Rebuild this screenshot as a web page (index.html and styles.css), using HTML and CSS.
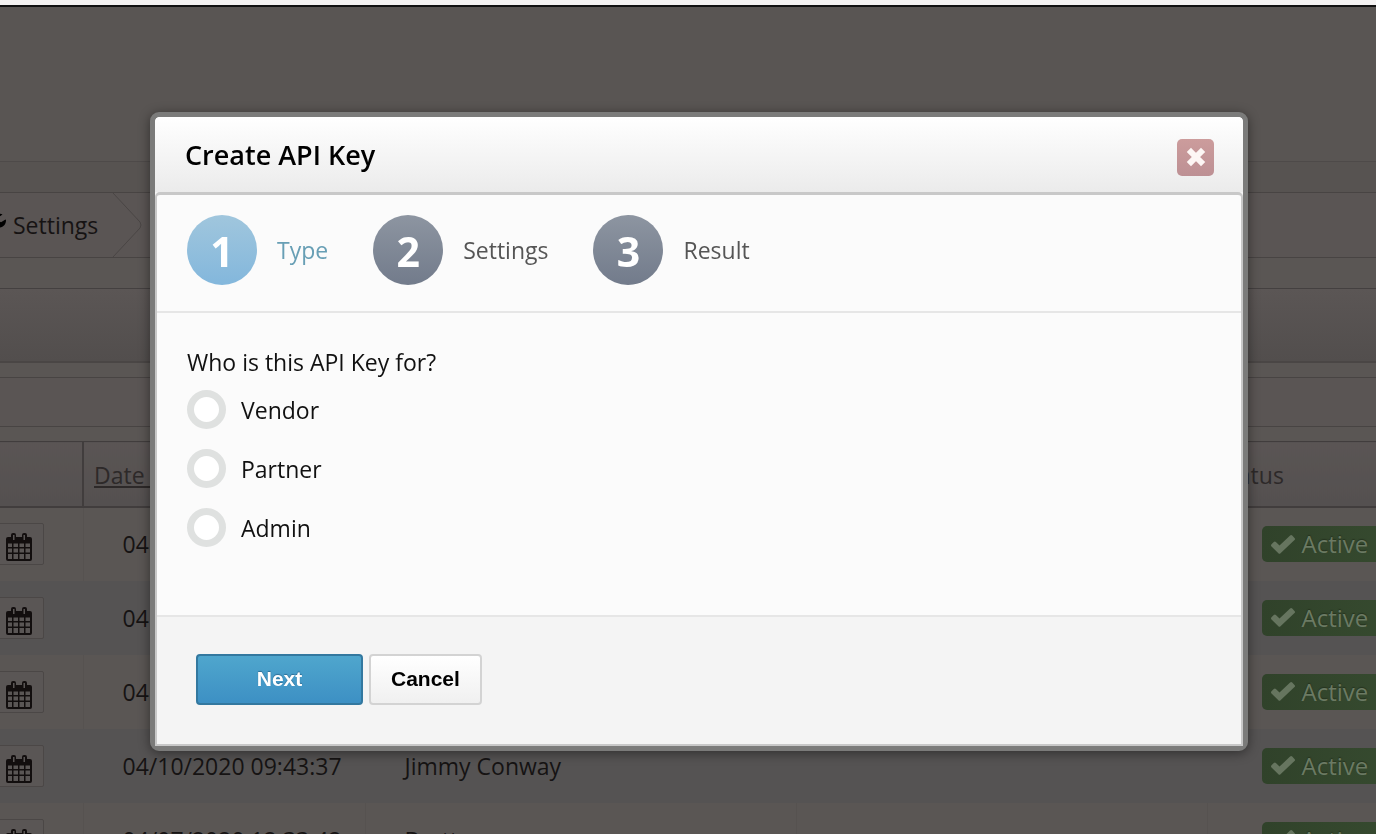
FILE: index.html
```html
<!DOCTYPE html>
<html lang="en">
  <head>
    <meta charset="UTF-8" />
    <meta name="viewport" content="width=device-width, initial-scale=1.0" />
    <title>API Keys</title>
    <link rel="stylesheet" href="styles.css">
  </head>
  <body>
    <!-- shared icons -->
    <svg class="sprite" aria-hidden="true">
      <symbol id="calendar" viewBox="0 0 26 28">
        <path fill-rule="evenodd" d="M2 4h3V2a2 2 0 0 1 2-2h1a2 2 0 0 1 2 2v2h6V2a2 2 0 0 1 2-2h1a2 2 0 0 1 2 2v2h3a2 2 0 0 1 2 2v20a2 2 0 0 1-2 2H2a2 2 0 0 1-2-2V6a2 2 0 0 1 2-2zM7 2v5h1.500V2zM17.500 2v5H19V2zM2 10.500v3.500h4v-3.500zM7.500 10.500v3.500h4.500v-3.500zM13.500 10.500v3.500h4.500v-3.500zM19.500 10.500v3.500H24v-3.500zM2 15.500v4h4v-4zM7.500 15.500v4h4.500v-4zM13.500 15.500v4h4.500v-4zM19.500 15.500v4H24v-4zM2 21v5h4v-5zM7.500 21v5h4.500v-5zM13.500 21v5h4.500v-5zM19.500 21v5H24v-5z" />
      </symbol>
      <symbol id="check" viewBox="0 0 24 19">
        <path d="M9.500 18.300a1.500 1.500 0 0 1-2.100 0L.5 11.400a1.500 1.500 0 0 1 0-2.100l2.300-2.300a1.500 1.500 0 0 1 2.100 0l3.600 3.600L19.100.600a1.500 1.500 0 0 1 2.100 0L23.500 2.900a1.500 1.500 0 0 1 0 2.100z" />
      </symbol>
    </svg>

    <div class="page">
      <div class="page-header"></div>
      <div class="toolbar"></div>

      <nav class="breadcrumb">
        <a class="crumb" href="#">
          <svg class="wrench" viewBox="0 0 24 24" aria-hidden="true">
            <path d="M23 7.500c0 4-3 7-7 7-1 0-2-.2-3-.6L5.500 21.500a2.800 2.800 0 0 1-4-4L9.100 10c-.4-1-.6-2-.6-3 0-4 3-6.500 7-6.500 1.500 0 3 .4 4 1.100L15 4.500v3.200l3 1.600 4.500-2.800c.3 0 .5.400.5 1z" />
          </svg>
          Settings
        </a>
        <svg class="crumb-arrow" viewBox="0 0 30 64" aria-hidden="true">
          <path d="M1 0L28 29q2 3 0 6L1 64" fill="none" stroke="#4a4645" />
        </svg>
      </nav>

      <div class="panel-title"></div>
      <div class="filters"></div>

      <table class="keys">
        <thead>
          <tr>
            <th class="col-icon"></th>
            <th class="col-date"><a href="#">Date Created</a></th>
            <th class="col-name">Name</th>
            <th class="col-note"></th>
            <th class="col-status">Status</th>
          </tr>
        </thead>
        <tbody>
          <tr>
            <td class="col-icon"><button class="icon-btn" aria-label="Schedule"><svg class="calendar"><use href="#calendar" /></svg></button></td>
            <td>04</td>
            <td></td>
            <td></td>
            <td class="col-status"><span class="badge"><svg class="check"><use href="#check" /></svg>Active</span></td>
          </tr>
          <tr>
            <td class="col-icon"><button class="icon-btn" aria-label="Schedule"><svg class="calendar"><use href="#calendar" /></svg></button></td>
            <td>04</td>
            <td></td>
            <td></td>
            <td class="col-status"><span class="badge"><svg class="check"><use href="#check" /></svg>Active</span></td>
          </tr>
          <tr>
            <td class="col-icon"><button class="icon-btn" aria-label="Schedule"><svg class="calendar"><use href="#calendar" /></svg></button></td>
            <td>04</td>
            <td></td>
            <td></td>
            <td class="col-status"><span class="badge"><svg class="check"><use href="#check" /></svg>Active</span></td>
          </tr>
          <tr>
            <td class="col-icon"><button class="icon-btn" aria-label="Schedule"><svg class="calendar"><use href="#calendar" /></svg></button></td>
            <td>04/10/2020 09:43:37</td>
            <td>Jimmy Conway</td>
            <td></td>
            <td class="col-status"><span class="badge"><svg class="check"><use href="#check" /></svg>Active</span></td>
          </tr>
          <tr>
            <td class="col-icon"><button class="icon-btn" aria-label="Schedule"><svg class="calendar"><use href="#calendar" /></svg></button></td>
            <td>04/07/2020 12:33:42</td>
            <td>Brett</td>
            <td></td>
            <td class="col-status"><span class="badge"><svg class="check"><use href="#check" /></svg>Active</span></td>
          </tr>
        </tbody>
      </table>
    </div>

    <div class="overlay">
      <form class="modal" role="dialog" aria-labelledby="modalTitle">
        <header class="modal-header">
          <h1 id="modalTitle">Create API Key</h1>
          <button type="button" class="close-btn" aria-label="Close">
            <svg viewBox="0 0 20 20" aria-hidden="true">
              <path d="M5 5l10 10M15 5L5 15" fill="none" stroke="#fdf6f4" stroke-width="6" stroke-linecap="square" />
            </svg>
          </button>
        </header>

        <div class="modal-content">
          <ol class="steps">
            <li class="step active"><span class="number">1</span>Type</li>
            <li class="step"><span class="number">2</span>Settings</li>
            <li class="step"><span class="number">3</span>Result</li>
          </ol>

          <fieldset class="options">
            <legend>Who is this API Key for?</legend>
            <label class="option"><input type="radio" name="type" value="vendor">Vendor</label>
            <label class="option"><input type="radio" name="type" value="partner">Partner</label>
            <label class="option"><input type="radio" name="type" value="admin">Admin</label>
          </fieldset>

          <footer class="modal-footer">
            <button type="button" class="btn btn-primary">Next</button>
            <button type="button" class="btn">Cancel</button>
          </footer>
        </div>
      </form>
    </div>
  </body>
</html>
```

FILE: styles.css
```css
* {
  margin: 0;
  padding: 0;
  box-sizing: border-box;
}

body {
  font-family: 'Open Sans', sans-serif;
  font-size: 23px;
  line-height: 32px;
  color: #161313;
  background: #5a5654;
  height: 100vh;
  overflow: hidden;
}

.sprite {
  display: none;
}

/* dimmed page behind the dialog */
.page {
  height: 100vh;
  overflow: hidden;
  border-top: 5px solid #f4f2f2;
}

.page-header {
  height: 157px;
  background: #595553;
  border-top: 2px solid #111;
  border-bottom: 1px solid #4e4a49;
}

.toolbar {
  height: 30px;
  background: #575351;
}

.breadcrumb {
  display: flex;
  height: 66px;
  background: #5a5554;
  border-top: 1px solid #484443;
  border-bottom: 1px solid #484443;
}

.crumb {
  display: flex;
  align-items: center;
  gap: 6px;
  margin-left: -17px;
  padding-right: 14px;
  color: #161313;
  text-decoration: none;
}

.wrench {
  width: 24px;
  height: 24px;
}

.crumb-arrow {
  width: 30px;
  height: 64px;
}

.panel-title {
  height: 75px;
  margin-top: 30px;
  background: linear-gradient(#5b5655, #524e4d);
  border-top: 1px solid #444040;
  border-bottom: 2px solid #4a4645;
}

.filters {
  height: 50px;
  margin: 14px 0;
  background: #5a5554;
  border-top: 1px solid #484443;
  border-bottom: 1px solid #484443;
}

.keys {
  width: 100%;
  table-layout: fixed;
  border-collapse: collapse;
}

.keys th {
  height: 65px;
  padding: 2px 10px 0;
  font-weight: normal;
  text-align: left;
  color: #2d2929;
  background: linear-gradient(#5a5554, #545050);
  border-top: 1px solid #413d3d;
  border-bottom: 2px solid #413d3d;
  white-space: nowrap;
}

.keys th a {
  color: inherit;
}

.keys .col-date {
  width: 282px;
  border-left: 2px solid #413d3d;
}

.keys .col-name {
  width: 431px;
}

.keys .col-status {
  width: 169px;
}

.keys td {
  height: 74px;
  padding: 0 0 0 39px;
  background: #5a5654;
  border-left: 1px solid #565250;
  white-space: nowrap;
}

.keys tbody tr:nth-child(even) td {
  background: #555353;
  border-left-color: #555353;
}

.keys .col-icon {
  width: 83px;
  padding: 0;
  border-left: none;
}

.keys td.col-status {
  padding-left: 54px;
}

.icon-btn {
  display: flex;
  align-items: center;
  justify-content: center;
  width: 51px;
  height: 42px;
  margin-left: -7px;
  padding-top: 6px;
  background: #5a5655;
  border: 1px solid #4b4746;
  border-radius: 2px;
}

.calendar {
  width: 26px;
  height: 28px;
  fill: #120e0e;
}

.badge {
  display: flex;
  align-items: center;
  gap: 7px;
  width: 130px;
  height: 36px;
  padding-left: 9px;
  font-size: 24px;
  color: #6b7a63;
  background: linear-gradient(90deg, #30422a, #364a2f);
  border-radius: 5px;
  text-shadow: 0 -1px 1px #25331f;
}

.check {
  width: 24px;
  height: 19px;
  fill: #66755f;
}

/* dialog */
.overlay {
  position: fixed;
  inset: 0;
  padding: 112px 128px 0 150px;
}

.modal {
  background: #f4f4f4;
  background-clip: padding-box;
  border: 5px solid #7b7b7a;
  border-radius: 9px;
  box-shadow: 0 2px 12px rgba(0, 0, 0, 0.45);
}

.modal-header {
  display: flex;
  align-items: center;
  justify-content: space-between;
  height: 75px;
  padding: 0 29px 0 30px;
  background: linear-gradient(#fff, #ebebeb);
  border-radius: 5px 5px 0 0;
}

h1 {
  font-size: 27px;
  font-weight: 600;
  color: #000;
}

.close-btn {
  display: flex;
  align-items: center;
  justify-content: center;
  width: 37px;
  height: 37px;
  margin-top: 5px;
  background: linear-gradient(#cc9c9c, #bd9094);
  border: none;
  border-radius: 5px;
}

.close-btn svg {
  width: 20px;
  height: 20px;
}

.modal-content {
  background: #fbfbfb;
  border: 2px solid #c8c8c8;
  border-top-width: 3px;
  border-radius: 5px 5px 0 0;
  color: #111;
}

.steps {
  display: flex;
  gap: 45px;
  height: 118px;
  padding: 20px 30px 0;
  list-style: none;
  border-bottom: 2px solid #e6e6e6;
}

.step {
  display: flex;
  align-items: center;
  gap: 20px;
  height: 70px;
  color: #555;
}

.number {
  width: 70px;
  height: 70px;
  font-size: 41px;
  font-weight: 700;
  line-height: 72px;
  text-align: center;
  color: #fff;
  background: linear-gradient(#8d95a1, #727b8b);
  border-radius: 50%;
}

.step.active {
  color: #689fb5;
}

.step.active .number {
  background: linear-gradient(#a0c6dd, #83b7dc);
}

.options {
  display: flex;
  flex-direction: column;
  gap: 20px;
  padding: 33px 30px 68px;
  border: none;
}

.options legend {
  float: left;
  margin-bottom: -8px;
}

.option {
  display: flex;
  align-items: center;
  align-self: flex-start;
  gap: 15px;
  height: 39px;
}

.option input {
  appearance: none;
  width: 39px;
  height: 39px;
  background: #fff;
  border: 7px solid #dfe1e0;
  border-radius: 50%;
}

.option input:checked {
  border-color: #83b7dc;
}

.modal-footer {
  display: flex;
  gap: 6px;
  padding: 37px 39px 39px;
  background: #f4f4f4;
  border-top: 2px solid #e6e6e6;
}

.btn {
  height: 51px;
  padding: 0 20px 2px;
  font-family: 'Liberation Sans', Arial, sans-serif;
  font-size: 21px;
  font-weight: bold;
  color: #000;
  background: linear-gradient(#fff, #f0f0f0);
  border: 2px solid #d3d3d3;
  border-radius: 4px;
}

.btn-primary {
  width: 167px;
  color: #fff;
  background: linear-gradient(#4fa6cd, #3d90c4);
  border-color: #33789f;
  text-shadow: 0 -1px 1px #2f6f96;
}
```
